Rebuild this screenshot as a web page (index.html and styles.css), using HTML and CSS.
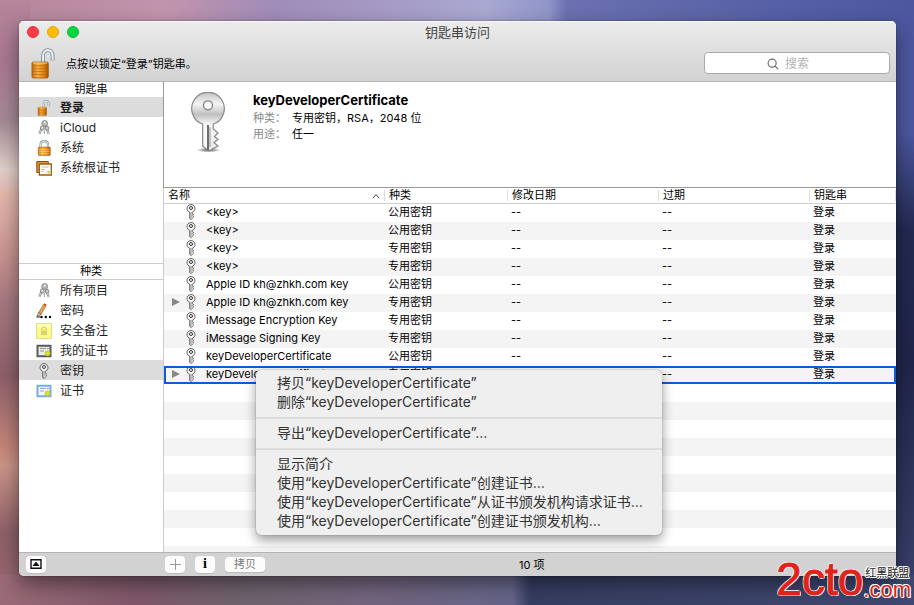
FILE: index.html
```html
<!DOCTYPE html>
<html lang="zh-CN">
<head>
<meta charset="utf-8">
<title>钥匙串访问</title>
<link rel="stylesheet" href="styles.css">
</head>
<body>
<svg class="defs" aria-hidden="true">
  <defs>
    <linearGradient id="gold" x1="0" x2="1"><stop offset="0" stop-color="#c9700d"/><stop offset=".35" stop-color="#fdb443"/><stop offset=".7" stop-color="#e88a14"/><stop offset="1" stop-color="#a4540a"/></linearGradient>
    <linearGradient id="silver" x1="0" y1="0" x2="0" y2="1"><stop offset="0" stop-color="#c4c4c4"/><stop offset=".2" stop-color="#f4f4f4"/><stop offset=".38" stop-color="#c0c0c0"/><stop offset=".55" stop-color="#fafafa"/><stop offset="1" stop-color="#e6e6e6"/></linearGradient>
    <radialGradient id="shade"><stop offset="0" stop-color="#222" stop-opacity=".8"/><stop offset="1" stop-color="#222" stop-opacity="0"/></radialGradient>
  </defs>
  <symbol id="unlocked" viewBox="0 0 26 32">
    <path d="M12.500 15V8.500C12.500 0 22.500 0 22.500 8V12.500" fill="none" stroke="#7b8b93" stroke-width="4"/>
    <path d="M12.500 15V8.500C12.500 0 22.500 0 22.500 8V12" fill="none" stroke="#e6f0f4" stroke-width="2.200"/>
    <rect x="1" y="14.500" width="17" height="16.500" rx="1.500" fill="url(#gold)" stroke="#9b5208" stroke-width=".8"/>
    <path d="M1.500 18.500h16M1.500 21.500h16M1.500 24.500h16M1.500 27.500h16" stroke="#a75a0b" stroke-width=".9" opacity=".75"/>
    <path d="M2 15.500h15" stroke="#ffd583" stroke-width="1"/>
  </symbol>
  <symbol id="locked" viewBox="0 0 16 16">
    <path d="M4.500 8V4.700C4.500-.2 12-.2 12 4.700V8" fill="none" stroke="#8e9799" stroke-width="2.200"/>
    <path d="M4.500 8V4.700C4.500-.2 12-.2 12 4.700V8" fill="none" stroke="#e8eef0" stroke-width="1"/>
    <rect x="2.300" y="7" width="12" height="8.500" rx="1" fill="url(#gold)" stroke="#b0640f" stroke-width=".6"/>
    <path d="M3 9.500h10.500M3 11.500h10.500M3 13.500h10.500" stroke="#ffd38a" stroke-width=".6"/>
  </symbol>
  <symbol id="keys" viewBox="0 0 16 16">
    <path d="M6.800 6 3.300 13.800M9.800 6 12.800 14" stroke="#8a8a8a" stroke-width="2.200"/>
    <path d="M6.800 6 3.300 13.800M9.800 6 12.800 14" stroke="#dedede" stroke-width=".9"/>
    <circle cx="8.700" cy="3.500" r="3" fill="#b4b4b4" stroke="#858585" stroke-width=".8"/><circle cx="8.700" cy="2.500" r=".9" fill="#fff"/>
    <circle cx="6.300" cy="8" r="2" fill="#c9c9c9" stroke="#777" stroke-width=".8"/><circle cx="11" cy="8.200" r="1.900" fill="#c9c9c9" stroke="#777" stroke-width=".8"/>
    <circle cx="6.300" cy="7.500" r=".7" fill="#fff"/><path d="M8 9.500 8.500 14" stroke="#999"/>
  </symbol>
  <symbol id="key" viewBox="0 0 10 16">
    <path d="M3.700 8.300A4 4 0 1 1 6.300 8.300V9.800L7.700 10.700 6.500 11.700 7.700 12.900 6.500 14 5.300 15.500 3.700 14.500z" fill="#f7f7f7" stroke="#555" stroke-width=".9"/>
    <circle cx="5" cy="4" r="1.500" fill="#fff" stroke="#333" stroke-width="1"/>
    <path d="M5 8v6" stroke="#777" stroke-width=".8"/>
  </symbol>
  <symbol id="bigkey" viewBox="0 0 36 62">
    <ellipse cx="18.500" cy="58" rx="12" ry="2.500" fill="url(#shade)"/>
    <path d="M12.700 32A16.300 16.300 0 1 1 23.300 32V37L28 41 24.500 44.500 28 47.500 24 50.500 28 54 18.500 59 12.700 54z" fill="url(#silver)" stroke="#8d8d8d" stroke-width="1.300"/>
    <path d="M13.700 33V53l3.600 4V35z" fill="#fff" opacity=".7"/>
    <path d="M18 33V58" stroke="#555" stroke-width="1.700"/>
    <path d="M20 35v20" stroke="#aaa" stroke-width="1.300"/>
    <circle cx="18" cy="13.200" r="4.500" fill="#fff" stroke="#8b8b8b" stroke-width="1.500"/>
  </symbol>
  <symbol id="roots" viewBox="0 0 16 16">
    <path d="M.8 1.500h11.500v11H.8z" fill="#d99a43" stroke="#8c4c07"/>
    <path d="M3.300 4h12v11h-12z" fill="#fff" stroke="#a15b0c" stroke-width="1.300"/>
    <path d="M5.500 7h7" stroke="#aaa" stroke-width=".8"/><path d="M5.500 9.500h3M5.500 11.500h2" stroke="#e6a6a0" stroke-width="1"/><circle cx="12.500" cy="12" r="1.500" fill="#c8d44b"/>
  </symbol>
  <symbol id="pencil" viewBox="0 0 16 16">
    <path d="M2.500 9.500 7.500 1.500 10 3 5 11.500z" fill="#e8a14b" stroke="#9c5a20" stroke-width=".6"/>
    <path d="M7.500 1.500 8.300.3 10.800 1.700 10 3z" fill="#d93c34"/><path d="M2.500 9.500 5 11.500 1 13.500z" fill="#f3d8a8" stroke="#333" stroke-width=".6"/>
    <path d="M.5 14h4" stroke="#222"/><circle cx="5.500" cy="14" r="1.200"/><circle cx="9.800" cy="14" r="1.200"/><circle cx="14" cy="14" r="1.200"/>
  </symbol>
  <symbol id="note" viewBox="0 0 16 16">
    <path d="M.5.500h15v15H.500z" fill="#fbfa8a" stroke="#dede88"/><path d="M1 1h14v4H1z" fill="#ffffb0"/>
    <path d="M6 7.500V6c0-2.500 4-2.500 4 0v1.500" fill="none" stroke="#d2d078" stroke-width="1.200"/><path d="M5 7.500h6v4.500H5z" fill="#d8d571"/>
  </symbol>
  <symbol id="mycert" viewBox="0 0 16 16">
    <path d="M1.500 2.800h13v10.400h-13z" fill="#e9eee9" stroke="#5b5b5b" stroke-width="2"/><path d="M4 5.500h6M4 8h4M11 5.500h2" stroke="#68706c" stroke-width=".7"/><circle cx="11.500" cy="10.300" r="2.600" fill="#d7e233" stroke="#b4c02a" stroke-width=".6"/>
  </symbol>
  <symbol id="cert" viewBox="0 0 16 16">
    <path d="M1.500 2.800h13v10.400h-13z" fill="#f2f8fc" stroke="#77ade0" stroke-width="2"/><path d="M4 5.500h6M4 8h4M11 5.500h2" stroke="#6882a0" stroke-width=".7"/><circle cx="11.500" cy="10.300" r="2.600" fill="#d7e233" stroke="#b4c02a" stroke-width=".6"/>
  </symbol>
</svg>

<main class="window">
  <header class="titlebar">
    <div class="title-row">
      <div class="lights">
        <button class="light close" aria-label="关闭"></button>
        <button class="light minimize" aria-label="最小化"></button>
        <button class="light zoom" aria-label="缩放"></button>
      </div>
      <h1 class="title">钥匙串访问</h1>
    </div>
    <div class="toolbar">
      <button class="lock" aria-label="锁定"><svg><use href="#unlocked"/></svg></button>
      <p class="lock-text">点按以锁定“登录”钥匙串。</p>
      <label class="search">
        <svg viewBox="0 0 14 14"><circle cx="6" cy="6" r="4.700"/><path d="M9.500 9.500 13 13"/></svg>
        <input type="search" placeholder="搜索" aria-label="搜索">
      </label>
    </div>
  </header>

  <div class="content">
    <aside class="sidebar">
      <nav class="group keychains">
        <h2 class="group-title">钥匙串</h2>
        <a class="item selected strong" href="#"><svg><use href="#unlocked"/></svg>登录</a>
        <a class="item" href="#"><svg><use href="#keys"/></svg>iCloud</a>
        <a class="item" href="#"><svg><use href="#locked"/></svg>系统</a>
        <a class="item" href="#"><svg><use href="#roots"/></svg>系统根证书</a>
      </nav>
      <nav class="group categories">
        <h2 class="group-title">种类</h2>
        <a class="item" href="#"><svg><use href="#keys"/></svg>所有项目</a>
        <a class="item" href="#"><svg><use href="#pencil"/></svg>密码</a>
        <a class="item" href="#"><svg><use href="#note"/></svg>安全备注</a>
        <a class="item" href="#"><svg><use href="#mycert"/></svg>我的证书</a>
        <a class="item selected" href="#"><svg><use href="#key"/></svg>密钥</a>
        <a class="item" href="#"><svg><use href="#cert"/></svg>证书</a>
      </nav>
    </aside>

    <section class="pane">
      <div class="detail">
        <svg class="detail-icon"><use href="#bigkey"/></svg>
        <div>
          <h2 class="detail-title">keyDeveloperCertificate</h2>
          <dl class="facts">
            <dt>种类：</dt><dd>专用密钥，RSA，2048 位</dd>
            <dt>用途：</dt><dd>任一</dd>
          </dl>
        </div>
      </div>
      <div class="list">
        <table>
          <colgroup><col class="c-name"><col class="c-kind"><col class="c-date"><col class="c-date"><col></colgroup>
          <thead>
            <tr>
              <th><span class="th sorted">名称<svg viewBox="0 0 8 6"><path d="M1 5 4 1.500 7 5"/></svg></span></th>
              <th><span class="th">种类</span></th><th><span class="th">修改日期</span></th><th><span class="th">过期</span></th><th><span class="th">钥匙串</span></th>
            </tr>
          </thead>
          <tbody>
            <tr><td><span class="name"><i></i><svg><use href="#key"/></svg>&lt;key&gt;</span></td><td>公用密钥</td><td>--</td><td>--</td><td>登录</td></tr>
            <tr><td><span class="name"><i></i><svg><use href="#key"/></svg>&lt;key&gt;</span></td><td>公用密钥</td><td>--</td><td>--</td><td>登录</td></tr>
            <tr><td><span class="name"><i></i><svg><use href="#key"/></svg>&lt;key&gt;</span></td><td>专用密钥</td><td>--</td><td>--</td><td>登录</td></tr>
            <tr><td><span class="name"><i></i><svg><use href="#key"/></svg>&lt;key&gt;</span></td><td>专用密钥</td><td>--</td><td>--</td><td>登录</td></tr>
            <tr><td><span class="name"><i></i><svg><use href="#key"/></svg>Apple ID kh@zhkh.com key</span></td><td>公用密钥</td><td>--</td><td>--</td><td>登录</td></tr>
            <tr><td><span class="name"><i class="expand"></i><svg><use href="#key"/></svg>Apple ID kh@zhkh.com key</span></td><td>专用密钥</td><td>--</td><td>--</td><td>登录</td></tr>
            <tr><td><span class="name"><i></i><svg><use href="#key"/></svg>iMessage Encryption Key</span></td><td>专用密钥</td><td>--</td><td>--</td><td>登录</td></tr>
            <tr><td><span class="name"><i></i><svg><use href="#key"/></svg>iMessage Signing Key</span></td><td>专用密钥</td><td>--</td><td>--</td><td>登录</td></tr>
            <tr><td><span class="name"><i></i><svg><use href="#key"/></svg>keyDeveloperCertificate</span></td><td>公用密钥</td><td>--</td><td>--</td><td>登录</td></tr>
            <tr class="current"><td><span class="name"><i class="expand"></i><svg><use href="#key"/></svg>keyDeveloperCertificate</span></td><td>专用密钥</td><td>--</td><td>--</td><td>登录</td></tr>
          </tbody>
        </table>
        <div class="menu" role="menu">
          <button role="menuitem">拷贝“keyDeveloperCertificate”</button>
          <button role="menuitem">删除“keyDeveloperCertificate”</button>
          <hr>
          <button role="menuitem">导出“keyDeveloperCertificate”…</button>
          <hr>
          <button role="menuitem">显示简介</button>
          <button role="menuitem">使用“keyDeveloperCertificate”创建证书…</button>
          <button role="menuitem">使用“keyDeveloperCertificate”从证书颁发机构请求证书…</button>
          <button role="menuitem">使用“keyDeveloperCertificate”创建证书颁发机构…</button>
        </div>
      </div>
    </section>
  </div>

  <footer class="statusbar">
    <div class="status-left">
      <button class="tool" aria-label="显示"><svg viewBox="0 0 12 10"><path d="M1 .8h10v8.400H1z" fill="none" stroke="#111" stroke-width="1.400"/><path d="M2.500 7 6 2.500 9.500 7z" fill="#111"/></svg></button>
    </div>
    <div class="status-right">
      <button class="tool" aria-label="添加"><svg viewBox="0 0 12 12"><path d="M6.500 1v11M1 6.500h11" stroke="#999"/></svg></button>
      <button class="tool info">i</button>
      <button class="tool copy">拷贝</button>
      <output class="count">10 项</output>
    </div>
  </footer>
</main>

<div class="watermark"><span class="mark-main">2cto</span><span class="mark-side"><span class="mark-name">红黑联盟</span><span class="mark-com">.com</span></span></div>
</body>
</html>
```
FILE: styles.css
```css
* { box-sizing: border-box; }

body {
  margin: 0;
  min-height: 100vh;
  padding: 21px 18px 29px 19px;
  display: flex;
  position: relative;
  overflow: hidden;
  color: #000;
  font-family: Inter, "Noto Sans CJK SC", sans-serif;
  font-size: 11px;
  background:
    linear-gradient(to right, #9b6a78, #80586a 15%, #6f646e 27%, #73657e 40%, #66668a 56%, #363d63 58%, #3a4268 75%, #3e4870) bottom / 100% 30px no-repeat,
    linear-gradient(#b5859a, #a87890 10%, #a58a95 20%, #e2d0cb 28%, #e3b8ad 32%, #c89490 42%, #a57880 50%, #8c6068 62%, #c5857a 74%, #cc9488 77%, #8d6068 88%, #9b6a72) left / 30px 100% no-repeat,
    linear-gradient(transparent 22%, #232a52 38%, #20264c 60%, #3b446e) right / 30px 100% no-repeat,
    linear-gradient(to right, #b5859a, #c294ad 18%, #a08cb8 30%, #a9a8d2 53%, #8f96c9 60%, #6b70b0 62%, #5660a6 85%, #4c57a0);
}

h1, h2, p, dl, dd { margin: 0; font-weight: normal; }
button, input { font: inherit; border: 0; padding: 0; margin: 0; }
.defs { position: absolute; width: 0; height: 0; }

.window {
  flex: 1;
  min-width: 0;
  display: flex;
  flex-direction: column;
  border-radius: 5px;
  background: #fff;
  overflow: hidden;
  box-shadow: 0 8px 20px rgba(0, 0, 0, .45), 0 0 2px rgba(0, 0, 0, .4);
}

.titlebar {
  background: linear-gradient(#ececec, #d2d2d2);
  border-bottom: 1px solid #b4b4b4;
  box-shadow: inset 0 1px #f8f8f8;
}
.title-row {
  display: grid;
  grid-template-columns: 1fr auto 1fr;
  align-items: center;
  height: 22px;
  padding: 0 8px;
}
.lights { display: flex; gap: 8px; }
.light { width: 12px; height: 12px; border-radius: 50%; }
.close { background: #fc3b47; border: 1px solid #e2323c; }
.minimize { background: #fdbc09; border: 1px solid #e0a40a; }
.zoom { background: #08d63f; border: 1px solid #0abb36; }
.title { font-size: 13px; line-height: 22px; color: #444; }

.toolbar { display: flex; align-items: center; height: 38px; padding: 2px 6px 0 12px; }
.lock { background: none; width: 25px; height: 31px; }
.lock svg { display: block; width: 25px; height: 31px; }
.lock-text { flex: 1; margin-left: 10px; padding-top: 2px; line-height: 16px; }
.search {
  display: flex;
  align-items: center;
  justify-content: center;
  gap: 6px;
  width: 186px;
  height: 22px;
  padding: 2px 14px 0 0;
  background: #fff;
  border: 1px solid #aaa;
  border-radius: 4px;
}
.search svg { width: 12px; height: 12px; fill: none; stroke: #666; stroke-width: 1.300; }
.search input { width: 28px; background: none; font-size: 12px; line-height: 18px; outline: 0; appearance: none; }
.search input::-webkit-search-cancel-button { display: none; }
.search input::placeholder { color: #b4b4b4; }

.content { flex: 1; display: grid; grid-template-columns: 145px 1fr; }
.sidebar { display: flex; flex-direction: column; border-right: 1px solid #ccc; }
.keychains { height: 181px; }
.categories { border-top: 1px solid #ccc; }
.group-title { text-align: center; font-size: 11px; line-height: 15px; }
.categories .group-title { border-bottom: 1px solid #ccc; }
.item {
  display: flex;
  align-items: center;
  gap: 8px;
  height: 20px;
  padding: 1px 0 0 17px;
  color: #1e1e1e;
  font-size: 12px;
  line-height: 18px;
  text-decoration: none;
}
.item svg { width: 16px; height: 16px; }
.selected { background: #dcdcdc; }
.strong { font-weight: bold; }

.pane { display: flex; flex-direction: column; min-width: 0; }
.detail {
  display: flex;
  gap: 27px;
  height: 106px;
  padding: 10px 26px;
  border-bottom: 1px solid #999;
  box-shadow: -1px 0 #999;
}
.detail-icon { width: 36px; height: 62px; }
.detail-title { font-size: 13px; font-weight: 700; line-height: 16px; padding-bottom: 2px; }
.facts { display: grid; grid-template-columns: 39px 1fr; line-height: 16px; }
.facts dt { color: #888; }

.list {
  flex: 1;
  position: relative;
  background: repeating-linear-gradient(#fff 0 18px, #f4f4f4 18px 36px) 0 16px;
}
table { width: 100%; border-collapse: separate; border-spacing: 0; table-layout: fixed; }
.c-name { width: 221px; }
.c-kind { width: 123px; }
.c-date { width: 151px; }
th {
  height: 16px;
  padding: 0;
  background: #fff;
  border-bottom: 1px solid #d0d0d0;
  font-weight: normal;
  text-align: left;
}
.th { display: flex; justify-content: space-between; align-items: center; height: 11px; padding: 0 4px; border-right: 1px solid #ddd; line-height: 11px; }
.th svg { width: 8px; height: 6px; fill: none; stroke: #444; }
td { height: 18px; padding: 0 3px 2px; line-height: 16px; white-space: nowrap; }
.name { display: flex; align-items: center; height: 16px; padding-left: 5px; }
.name svg { width: 10px; height: 16px; margin-right: 10px; }
.name i { width: 14px; height: 8px; }
.name .expand::before { content: ""; display: block; width: 0; border: 4px solid transparent; border-left: 8px solid #888; border-right: 0; }
.current { outline: 2px solid #0b5cd9; outline-offset: -2px; }

.menu {
  position: absolute;
  top: 182px;
  left: 92px;
  width: 406px;
  padding: 4px 0;
  border-radius: 5px;
  background: #efefef;
  box-shadow: 0 5px 12px rgba(0, 0, 0, .4), 0 0 1px rgba(0, 0, 0, .6);
}
.menu button {
  display: block;
  width: 100%;
  height: 19px;
  padding: 0 0 2px 21px;
  background: none;
  color: #333;
  font-size: 14px;
  line-height: 17px;
  text-align: left;
  white-space: nowrap;
}
.menu hr { height: 2px; margin: 5px 0; border: 0; background: #dcdcdc; }

.statusbar {
  display: grid;
  grid-template-columns: 145px 1fr;
  height: 24px;
  background: #d2d2d2;
  border-top: 1px solid #b4b4b4;
}
.status-left, .status-right { display: flex; align-items: center; gap: 10px; padding-bottom: 1px; }
.status-left { padding-left: 7px; }
.status-right { padding-left: 1px; }
.tool {
  display: flex;
  align-items: center;
  justify-content: center;
  width: 20px;
  height: 17px;
  border-radius: 4px;
  background: #fcfcfc;
  box-shadow: 0 1px #bbb;
}
.tool svg { width: 12px; height: 12px; }
.info { font: bold 14px "Liberation Serif", serif; }
.copy { width: 40px; height: 15px; color: #777; line-height: 15px; }
.count { flex: 1; padding-left: 244px; }

.watermark {
  position: absolute;
  right: 3px;
  bottom: 5px;
  display: flex;
  align-items: flex-end;
  color: #df231b;
  font-family: "Liberation Sans", "Noto Sans CJK SC", sans-serif;
  text-shadow: 1px 0 #fff, -1px 0 #fff, 0 1px #fff, 0 -1px #fff, 1px 1px #fff, -1px -1px #fff;
}
.mark-main { font-size: 46px; line-height: 42px; -webkit-text-stroke: 1px #df231b; }
.mark-side { display: flex; flex-direction: column; }
.mark-name { padding-left: 2px; color: #222; font-size: 11px; line-height: 13px; }
.mark-com { font-size: 22px; line-height: 20px; }
```
